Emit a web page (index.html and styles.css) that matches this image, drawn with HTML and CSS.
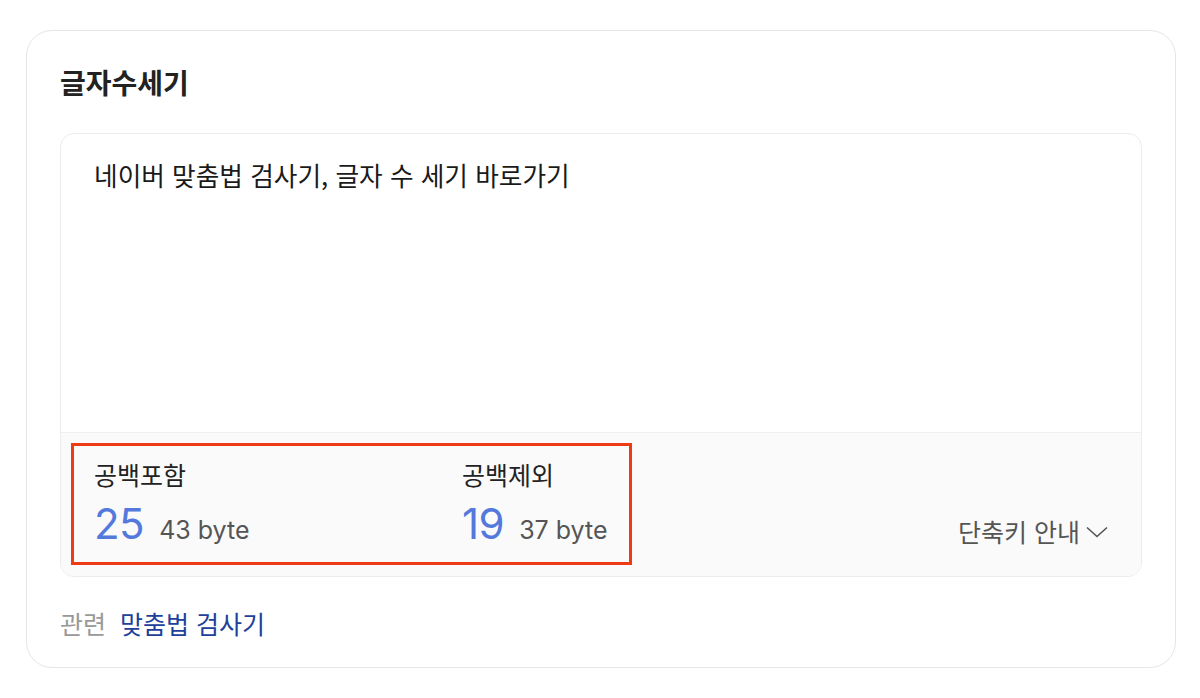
FILE: index.html
```html
<!DOCTYPE html>
<html lang="ko">
<head>
<meta charset="utf-8">
<title>글자수세기</title>
<link rel="stylesheet" href="styles.css">
</head>
<body>
<section class="card">
  <h2 class="title">글자수세기</h2>
  <div class="editor">
    <div class="input">네이버 맞춤법 검사기, 글자 수 세기 바로가기</div>
    <div class="footer">
      <div class="counts">
        <div class="count">
          <div class="label">공백포함</div>
          <div class="value"><span class="num">25</span><span class="byte">43 byte</span></div>
        </div>
        <div class="count">
          <div class="label">공백제외</div>
          <div class="value"><span class="num">19</span><span class="byte">37 byte</span></div>
        </div>
      </div>
      <button class="shortcut">단축키 안내<svg class="chev" width="22" height="12" viewBox="0 0 22 12"><path d="M1 1.5 L11 10.5 L21 1.5" fill="none" stroke="#555" stroke-width="1.6"/></svg></button>
    </div>
  </div>
  <div class="related"><span class="rel-label">관련</span><a class="rel-link" href="#">맞춤법 검사기</a></div>
</section>
</body>
</html>
```

FILE: styles.css
```css
html, body {
  margin: 0;
  padding: 0;
  background: #ffffff;
}
body {
  font-family: "Noto Sans CJK KR", "Noto Sans", "Liberation Sans", sans-serif;
  color: #222;
  padding: 30px 24px 0 26px;
}
.card {
  box-sizing: border-box;
  width: 1150px;
  height: 638px;
  border: 1.5px solid #e6e6e6;
  border-radius: 26px;
  padding: 28px 33px 0 33px;
}
.title {
  margin: 0;
  font-size: 28px;
  font-weight: 700;
  line-height: 46px;
  color: #222;
}
.editor {
  margin-top: 28px;
  box-sizing: border-box;
  height: 444px;
  border: 1px solid #ececec;
  border-radius: 14px;
  display: flex;
  flex-direction: column;
  overflow: hidden;
}
.input {
  flex: 1;
  padding: 23px 33px;
  font-size: 25.7px;
  line-height: 36px;
  color: #1a1a1a;
}
.footer {
  height: 144px;
  box-sizing: border-box;
  background: #fafafa;
  border-top: 1px solid #efefef;
  padding: 10px 33px 10px 10px;
  display: flex;
  align-items: flex-end;
  justify-content: space-between;
}
.counts {
  box-sizing: border-box;
  width: 561px;
  height: 122px;
  border: 3px solid #ef3a16;
  padding: 11px 0 0 20px;
  display: flex;
  align-self: flex-start;
}
.count {
  width: 368px;
}
.count + .count {
  width: auto;
}
.label {
  font-size: 25px;
  line-height: 34px;
  color: #222;
}
.value {
  display: flex;
  align-items: baseline;
  margin-top: 9px;
  font-family: "Inter", "Liberation Sans", sans-serif;
}
.num {
  font-size: 42px;
  line-height: 48px;
  color: #5479dc;
  letter-spacing: -0.5px;
}
.byte {
  margin-left: 15px;
  font-size: 25px;
  color: #555;
}
.shortcut {
  border: 0;
  background: none;
  padding: 0;
  margin: 0 0 18px 0;
  font-family: "Noto Sans CJK KR", "Noto Sans", sans-serif;
  font-size: 25px;
  line-height: 34px;
  color: #555;
  display: flex;
  align-items: center;
  gap: 6px;
  cursor: pointer;
}
.chev {
  display: block;
  margin-top: 2px;
}
.related {
  margin-top: 29px;
  font-size: 25px;
  line-height: 34px;
}
.rel-label {
  color: #999;
  margin-right: 14px;
}
.rel-link {
  color: #21409a;
  text-decoration: none;
}
```
